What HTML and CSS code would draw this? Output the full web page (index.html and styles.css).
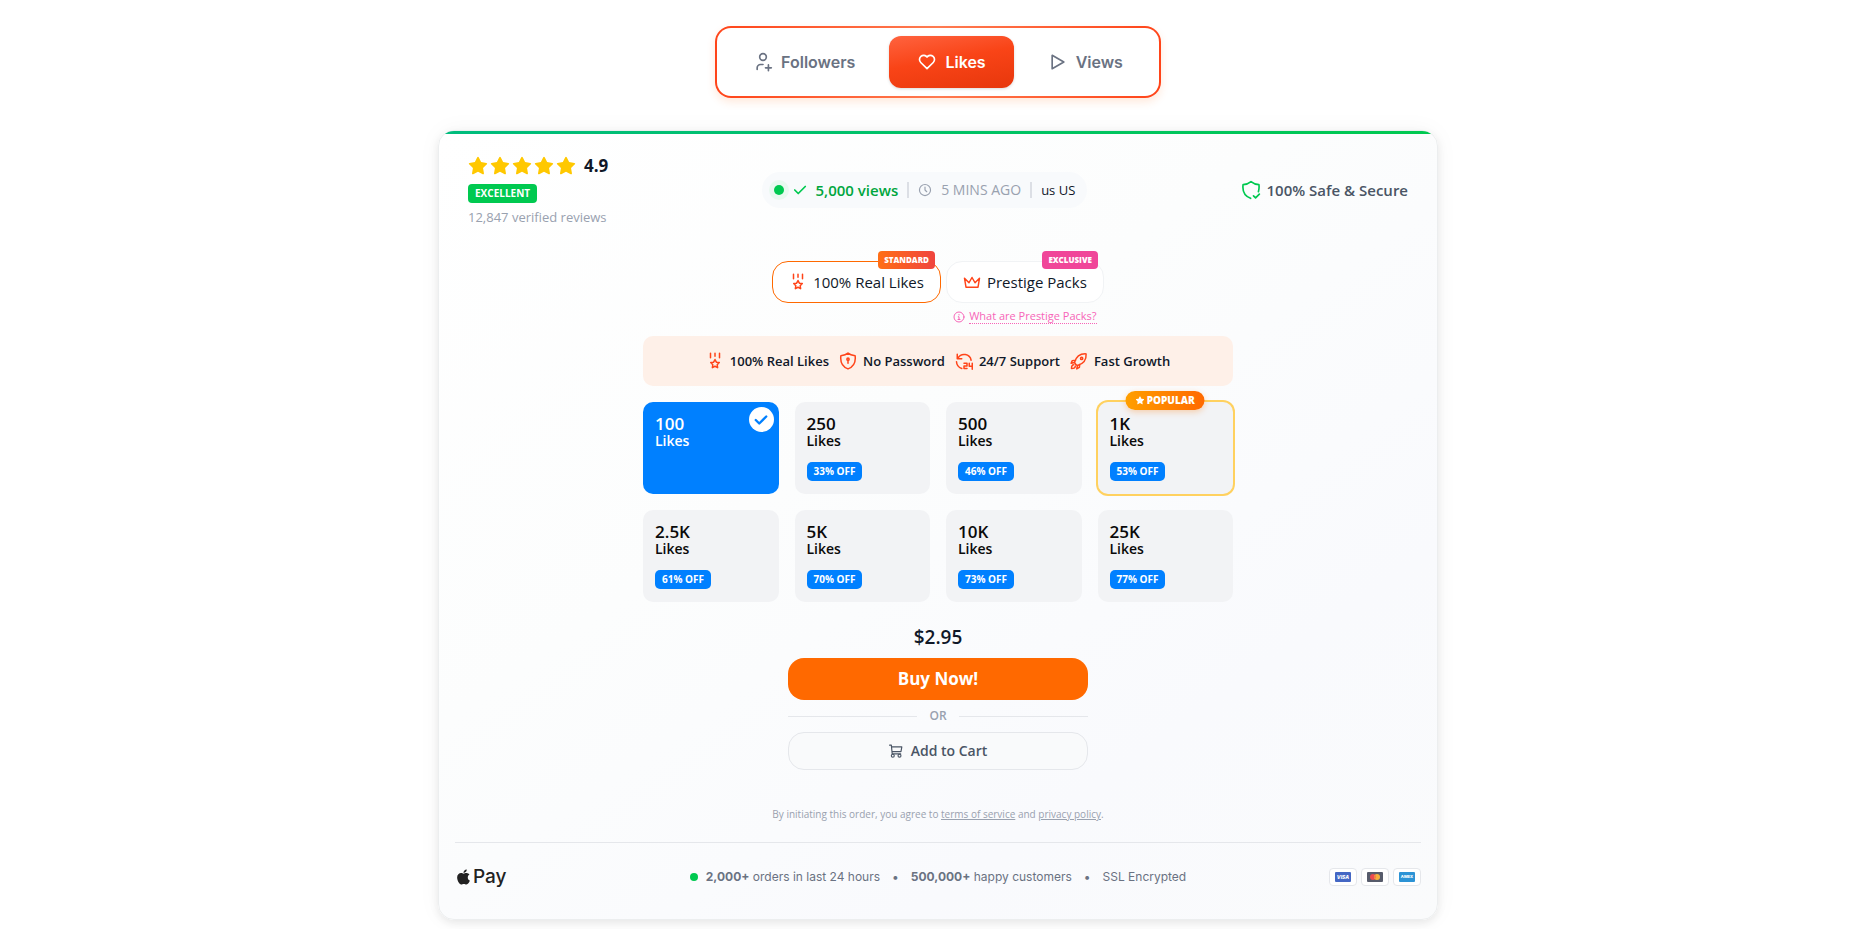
FILE: index.html
```html
<!DOCTYPE html>
<html lang="en">
<head>
  <meta charset="UTF-8">
  <meta name="viewport" content="width=device-width, initial-scale=1">
  <title>Buy Likes</title>
  <link rel="stylesheet" href="styles.css">
</head>
<body>
  <!-- icon sprite -->
  <svg class="sprite" aria-hidden="true">
    <symbol id="star" viewBox="0 0 24 24"><path fill="currentColor" stroke="none" d="M8.243 7.34l-6.38.925-.113.023a1 1 0 0 0-.44 1.684l4.622 4.499-1.09 6.355-.013.11a1 1 0 0 0 1.464.944l5.706-3 5.693 3 .1.046a1 1 0 0 0 1.352-1.1l-1.091-6.355 4.624-4.5.078-.085a1 1 0 0 0-.633-1.62l-6.38-.926-2.852-5.78a1 1 0 0 0-1.794 0z"/></symbol>
    <symbol id="check" viewBox="0 0 24 24"><path d="M3 12l6 6L21 6"/></symbol>
    <symbol id="medal" viewBox="0 0 24 24"><path d="M6 1.500v6M12 1.500v4M18 1.500v6M12 10l1.800 3.600 3.900.5-2.800 2.800.6 4-3.500-1.900-3.500 1.900.6-4-2.800-2.800 3.900-.5z"/></symbol>
  </svg>

  <nav class="tabs">
    <button class="tab" type="button">
      <svg class="icon" viewBox="0 0 24 24"><circle cx="12" cy="6" r="4"/><path d="M5 21v-2a4 4 0 0 1 4-4h3M15 19h7M18.500 15.500v7"/></svg>
      Followers
    </button>
    <button class="tab tab-active" type="button">
      <svg class="icon" viewBox="0 0 24 24"><path d="M19.500 12.572L12 20l-7.500-7.428A5 5 0 1 1 12 6.006a5 5 0 1 1 7.500 6.572"/></svg>
      Likes
    </button>
    <button class="tab" type="button">
      <svg class="icon" viewBox="0 0 24 24"><path d="M5 4v16l14-8z"/></svg>
      Views
    </button>
  </nav>

  <main class="card">
    <header class="card-header">
      <div class="rating">
        <div class="rating-row">
          <span class="stars">
            <svg><use href="#star"/></svg>
            <svg><use href="#star"/></svg>
            <svg><use href="#star"/></svg>
            <svg><use href="#star"/></svg>
            <svg><use href="#star"/></svg>
          </span>
          <span class="score">4.9</span>
        </div>
        <span class="excellent">EXCELLENT</span>
        <span class="reviews">12,847 verified reviews</span>
      </div>

      <div class="activity">
        <span class="dot dot-live"></span>
        <svg class="icon-sm icon-bold green"><use href="#check"/></svg>
        <strong>5,000 views</strong>
        <span class="sep"></span>
        <svg class="icon-sm" viewBox="0 0 24 24"><circle cx="12" cy="12" r="9.500"/><path d="M12 7v5l3 3"/></svg>
        <span>5 MINS AGO</span>
        <span class="sep"></span>
        <span class="country">us US</span>
      </div>

      <div class="secure">
        <svg class="icon green" viewBox="0 0 24 24"><path d="M11.500 22C4 19 1.500 13 2.500 5.500C6 5.500 9 4.600 12 2c3 2.600 6 3.500 9.500 3.500.4 3 .3 5.500-.6 8.500M15 19l2.500 2.500L22 17"/></svg>
        100% Safe &amp; Secure
      </div>
    </header>

    <section class="quality">
      <div class="quality-item">
        <button class="quality-btn quality-selected" type="button">
          <svg class="icon-md"><use href="#medal"/></svg>
          100% Real Likes
          <span class="tag tag-standard">STANDARD</span>
        </button>
      </div>
      <div class="quality-item">
        <button class="quality-btn" type="button">
          <svg class="icon-md" viewBox="0 0 24 24"><path d="M12 6l4 7 6-6-2 12H4L2 7l6 6z"/></svg>
          Prestige Packs
          <span class="tag tag-exclusive">EXCLUSIVE</span>
        </button>
        <a class="hint" href="#prestige">
          <svg class="icon-xs" viewBox="0 0 24 24"><circle cx="12" cy="12" r="10"/><path d="M12 7v1M10.500 11.500H12V17M10 17h4"/></svg>
          <span>What are Prestige Packs?</span>
        </a>
      </div>
    </section>

    <section class="order">
      <ul class="features">
        <li><svg class="icon-md"><use href="#medal"/></svg>100% Real Likes</li>
        <li><svg class="icon-md" viewBox="0 0 24 24"><path d="M12 1.500c3 2.500 6 3 9.500 3.500C22.500 13 20 19.500 12 22.500 4 19.500 1.500 13 2.500 5 6 4.500 9 4 12 1.500zM12 11v4"/><circle cx="12" cy="9.500" r="1.500"/></svg>No Password</li>
        <li><svg class="icon-md" viewBox="0 0 24 24"><path d="M3 3v6h6M4 8a9.500 9.500 0 0 1 17.500 3M2 13a10 10 0 0 0 7 9M12 15h4v3.500h-4V22h4M19 15v4h4M23 15v8"/></svg>24/7 Support</li>
        <li><svg class="icon-md" viewBox="0 0 24 24"><path d="M8 17l-2-3C8 7 13 2 21.500 2.500 22 10.500 17 16 10 18zM7.500 11L3 11.500 1.500 15 6 14M13 16.500l-.5 4L9 22.500 10 18M5 17c-2 0-3 2-3 5 3 0 5-1 5-3"/><circle cx="15.500" cy="8.500" r="1.500"/></svg>Fast Growth</li>
      </ul>

      <div class="packs">
        <button class="pack pack-selected" type="button">
          <span class="amount">100</span><span class="unit">Likes</span>
          <span class="pack-check"><svg><use href="#check"/></svg></span>
        </button>
        <button class="pack" type="button">
          <span class="amount">250</span><span class="unit">Likes</span>
          <span class="off">33% OFF</span>
        </button>
        <button class="pack" type="button">
          <span class="amount">500</span><span class="unit">Likes</span>
          <span class="off">46% OFF</span>
        </button>
        <button class="pack pack-popular" type="button">
          <span class="popular"><svg><use href="#star"/></svg>POPULAR</span>
          <span class="amount">1K</span><span class="unit">Likes</span>
          <span class="off">53% OFF</span>
        </button>
        <button class="pack" type="button">
          <span class="amount">2.5K</span><span class="unit">Likes</span>
          <span class="off">61% OFF</span>
        </button>
        <button class="pack" type="button">
          <span class="amount">5K</span><span class="unit">Likes</span>
          <span class="off">70% OFF</span>
        </button>
        <button class="pack" type="button">
          <span class="amount">10K</span><span class="unit">Likes</span>
          <span class="off">73% OFF</span>
        </button>
        <button class="pack" type="button">
          <span class="amount">25K</span><span class="unit">Likes</span>
          <span class="off">77% OFF</span>
        </button>
      </div>
    </section>

    <section class="checkout">
      <p class="price">$2.95</p>
      <button class="buy" type="button">Buy Now!</button>
      <div class="or">OR</div>
      <button class="cart" type="button">
        <svg class="icon-sm" viewBox="0 0 24 24"><path d="M1 2h3l1.500 15H20M4.500 5H22l-1.500 8H5"/><circle cx="6.500" cy="20" r="2.500"/><circle cx="18" cy="20" r="2.500"/></svg>
        Add to Cart
      </button>
    </section>

    <p class="terms">By initiating this order, you agree to <a href="#terms">terms of service</a> and <a href="#privacy">privacy policy</a>.</p>

    <footer class="card-footer">
      <div class="apple-pay">
        <svg viewBox="0 0 384 512"><path fill="currentColor" d="M318.700 268.700c-.2-36.700 16.400-64.400 50-84.800-18.800-26.900-47.200-41.700-84.700-44.600-35.500-2.800-74.300 20.700-88.500 20.700-15 0-49.400-19.700-76.400-19.700C63.300 141.200 4 184.800 4 273.500q0 39.300 14.400 81.200c12.800 36.700 59 126.700 107.200 125.200 25.200-.6 43-17.900 75.800-17.900 31.800 0 48.300 17.900 76.400 17.900 48.600-.7 90.400-82.500 102.600-119.300-65.200-30.700-61.700-90-61.700-91.900zm-56.600-164.200c27.300-32.400 24.800-61.900 24-72.500-24.100 1.400-52 16.400-67.900 34.900-17.500 19.800-27.800 44.300-25.600 71.900 26.100 2 49.900-11.400 69.500-34.300z"/></svg>
        Pay
      </div>
      <div class="stats">
        <span class="dot"></span>
        <span><b>2,000+</b> orders in last 24 hours</span>
        <span class="bullet">•</span>
        <span><b>500,000+</b> happy customers</span>
        <span class="bullet">•</span>
        <span>SSL Encrypted</span>
      </div>
      <div class="brands">
        <span class="brand"><span class="visa">VISA</span></span>
        <span class="brand"><svg viewBox="0 0 16 10"><rect width="16" height="10" rx="1" fill="#565b6b"/><circle cx="6" cy="5" r="3" fill="#eb4b50"/><circle cx="10" cy="5" r="3" fill="#f5b13d"/><path d="M8 2.800a3 3 0 0 1 0 4.400 3 3 0 0 1 0-4.400" fill="#f58045"/></svg></span>
        <span class="brand"><span class="amex">AMEX</span></span>
      </div>
    </footer>
  </main>
</body>
</html>
```
FILE: styles.css
```css
* {
  box-sizing: border-box;
}
body {
  margin: 0;
  padding: 26px 16px 10px;
  background: #fff;
  color: #101828;
  font-family: "Open Sans", "Noto Sans", sans-serif;
  font-size: 14px;
  line-height: 20px;
}
button {
  font: inherit;
  color: inherit;
  border: 0;
  cursor: pointer;
}
svg {
  display: block;
  flex: none;
}
.sprite {
  position: absolute;
  width: 0;
  height: 0;
}
.icon, .icon-md, .icon-sm, .icon-xs, .pack-check svg {
  fill: none;
  stroke: currentColor;
  stroke-width: 2;
  stroke-linecap: round;
  stroke-linejoin: round;
}
.icon {
  width: 20px;
  height: 20px;
}
.icon-md {
  width: 18px;
  height: 18px;
  color: #ff4419;
}
.icon-sm {
  width: 14px;
  height: 14px;
}
.icon-xs {
  width: 12px;
  height: 12px;
}
.icon-bold {
  stroke-width: 3;
}
.green {
  color: #00c950;
}

/* tabs */
.tabs {
  display: flex;
  gap: 6px;
  width: fit-content;
  margin: 0 auto 32px;
  padding: 8px;
  border: 2px solid transparent;
  border-radius: 16px;
  background: linear-gradient(#fff, #fff) padding-box, linear-gradient(90deg, #ff4419, #ff7a50 50%, #ff4419) border-box;
  box-shadow: 0 4px 8px rgba(255, 120, 40, 0.16);
  font-family: Inter, sans-serif;
}
.tab {
  display: flex;
  align-items: center;
  gap: 8px;
  padding: 14px 28px;
  border-radius: 12px;
  background: none;
  color: #6a7282;
  font-size: 16px;
  font-weight: 600;
  line-height: 24px;
}
.tab-active {
  background: linear-gradient(170deg, #ff633f, #f94417 45%, #e7370c);
  color: #fff;
  box-shadow: 0 1px 3px rgba(0, 0, 0, 0.15);
}

/* order card */
.card {
  position: relative;
  max-width: 1000px;
  margin: 0 auto;
  padding: 21px 16px 32px;
  overflow: hidden;
  border: 1px solid #eceeef;
  border-radius: 16px;
  background: linear-gradient(145deg, #fff, #fcfdfd 40%, #f9fafd 75%, #fafbfc);
  box-shadow: 0 3px 8px rgba(0, 0, 0, 0.08), 0 0 24px rgba(0, 0, 0, 0.04);
}
.card::before {
  content: "";
  position: absolute;
  top: 0;
  left: 0;
  right: 0;
  height: 3px;
  background: linear-gradient(90deg, #00bc7d, #00c950);
}
.card-header {
  display: flex;
  align-items: center;
  justify-content: space-between;
  padding: 0 13px;
}
.rating {
  display: flex;
  flex-direction: column;
  align-items: flex-start;
  gap: 4px;
}
.rating-row {
  display: flex;
  align-items: center;
  gap: 8px;
}
.stars {
  display: flex;
  gap: 2px;
  color: #ffc800;
}
.stars svg {
  width: 20px;
  height: 20px;
}
.score {
  font-size: 17px;
  font-weight: 700;
  line-height: 28px;
}
.excellent {
  padding: 0 7px;
  border-radius: 4px;
  background: #00c950;
  color: #fff;
  font-size: 10px;
  font-weight: 700;
  line-height: 19px;
}
.reviews {
  color: #99a1af;
  font-size: 13px;
}
.activity {
  display: flex;
  align-items: center;
  gap: 9px;
  padding: 8px 12px;
  border-radius: 18px;
  background: #f8fafc;
  color: #99a1af;
}
.activity strong {
  color: #00a63e;
  font-size: 15px;
  font-weight: 600;
}
.dot {
  width: 8px;
  height: 8px;
  border-radius: 50%;
  background: #00c950;
}
.dot-live {
  width: 10px;
  height: 10px;
  box-shadow: 0 0 0 5px #e9f9f0;
}
.sep {
  width: 2px;
  height: 16px;
  background: #dcdfe5;
}
.country {
  color: #101828;
  font-size: 13px;
}
.secure {
  display: flex;
  align-items: center;
  gap: 6px;
  color: #4a5565;
  font-size: 15px;
  font-weight: 600;
}

/* quality picker */
.quality {
  display: flex;
  justify-content: center;
  align-items: flex-start;
  gap: 5px;
  margin-top: 34px;
}
.quality-item {
  display: flex;
  flex-direction: column;
  align-items: center;
  gap: 6px;
}
.quality-btn {
  position: relative;
  display: flex;
  align-items: center;
  gap: 6px;
  padding: 10px 16px;
  border: 1px solid #f1f3f5;
  border-radius: 16px;
  background: #fff;
  font-size: 15px;
}
.quality-selected {
  border-color: #ff6900;
}
.tag {
  position: absolute;
  top: -11px;
  right: 5px;
  padding: 0 6px;
  border-radius: 4px;
  color: #fff;
  font-size: 8px;
  font-weight: 800;
  line-height: 18px;
}
.tag-standard {
  background: linear-gradient(90deg, #ff6f16, #f0443e);
}
.tag-exclusive {
  background: #f04699;
}
.hint {
  display: flex;
  align-items: center;
  gap: 4px;
  color: #f765b8;
  font-size: 11px;
  line-height: 14px;
  text-decoration: none;
}
.hint span {
  border-bottom: 1px dotted #f765b8;
}

/* features and packs */
.order {
  max-width: 590px;
  margin: 12px auto 0;
}
.features {
  display: flex;
  flex-wrap: wrap;
  justify-content: center;
  gap: 10px;
  margin: 0 0 16px;
  padding: 15px;
  border-radius: 10px;
  background: #fef0e8;
  list-style: none;
  font-size: 13px;
  font-weight: 600;
}
.features li {
  display: flex;
  align-items: center;
  gap: 6px;
}
.packs {
  display: grid;
  grid-template-columns: repeat(4, 1fr);
  gap: 16px;
}
.pack {
  position: relative;
  display: flex;
  flex-direction: column;
  align-items: flex-start;
  min-height: 92px;
  padding: 13px 12px;
  border-radius: 10px;
  background: #f2f3f5;
  color: #0a0a0a;
  font-weight: 600;
}
.pack-selected {
  background: #0080ff;
  color: #fff;
}
.pack-popular {
  box-shadow: 0 0 0 2px #ffd15f;
}
.amount {
  font-size: 17px;
  line-height: 18px;
}
.unit {
  font-size: 14px;
  line-height: 15px;
}
.off {
  margin-top: auto;
  padding: 0 7px;
  border-radius: 5px;
  background: #0080ff;
  color: #fff;
  font-size: 10px;
  font-weight: 700;
  line-height: 19px;
}
.pack-check {
  position: absolute;
  top: 5px;
  right: 5px;
  display: grid;
  place-items: center;
  width: 25px;
  height: 25px;
  border-radius: 50%;
  background: #fff;
  color: #0080ff;
}
.pack-check svg {
  width: 14px;
  height: 14px;
  stroke-width: 4;
}
.popular {
  position: absolute;
  top: -11px;
  left: 50%;
  display: flex;
  align-items: center;
  gap: 2px;
  padding: 0 10px;
  border-radius: 10px;
  background: linear-gradient(90deg, #ff9f00, #ff6900);
  box-shadow: 0 2px 6px rgba(255, 120, 0, 0.3);
  color: #fff;
  font-size: 10px;
  font-weight: 800;
  line-height: 19px;
  transform: translateX(-50%);
}
.popular svg {
  width: 9px;
  height: 9px;
}

/* checkout */
.checkout {
  display: flex;
  flex-direction: column;
  max-width: 300px;
  margin: 21px auto 0;
}
.price {
  margin: 0 0 7px;
  font-size: 19px;
  font-weight: 600;
  line-height: 28px;
  text-align: center;
}
.buy {
  padding: 9px;
  border-radius: 16px;
  background: #ff6900;
  color: #fff;
  font-size: 17px;
  font-weight: 700;
  line-height: 24px;
}
.or {
  display: flex;
  align-items: center;
  gap: 12px;
  margin: 8px 0;
  color: #99a1af;
  font-size: 12px;
  font-weight: 600;
  line-height: 16px;
}
.or::before, .or::after {
  content: "";
  flex: 1;
  height: 1px;
  background: #e5e7eb;
}
.cart {
  display: flex;
  align-items: center;
  justify-content: center;
  gap: 8px;
  padding: 8px;
  border: 1px solid #e5e7eb;
  border-radius: 16px;
  background: #f9fafb;
  color: #4a5565;
  font-weight: 600;
}
.terms {
  margin: 37px 0 21px;
  color: #99a1af;
  font-size: 10px;
  line-height: 14px;
  text-align: center;
}
.terms a {
  color: inherit;
}

/* footer */
.card-footer {
  display: grid;
  grid-template-columns: 1fr auto 1fr;
  align-items: center;
  padding-top: 24px;
  border-top: 1px solid #e5e7eb;
  color: #6a7282;
  font-family: Inter, sans-serif;
  font-size: 12px;
}
.apple-pay {
  display: flex;
  align-items: center;
  gap: 3px;
  padding-left: 2px;
  color: #222;
  font-size: 19px;
  font-weight: 500;
}
.apple-pay svg {
  width: 13px;
  height: 18px;
}
.stats {
  display: flex;
  align-items: center;
  gap: 8px;
}
.bullet {
  padding: 0 4px;
}
.brands {
  display: flex;
  justify-content: flex-end;
  gap: 4px;
}
.brand {
  display: grid;
  place-items: center;
  width: 28px;
  height: 18px;
  border: 1px solid #e5e7eb;
  border-radius: 4px;
  background: #fff;
}
.brand svg {
  width: 16px;
  height: 10px;
}
.visa, .amex {
  width: 16px;
  border-radius: 1px;
  background: #4467c4;
  color: #fff;
  font-size: 5px;
  font-weight: 800;
  font-style: italic;
  line-height: 10px;
  text-align: center;
}
.amex {
  background: #2c93d5;
  font-size: 4px;
  font-style: normal;
}
```
